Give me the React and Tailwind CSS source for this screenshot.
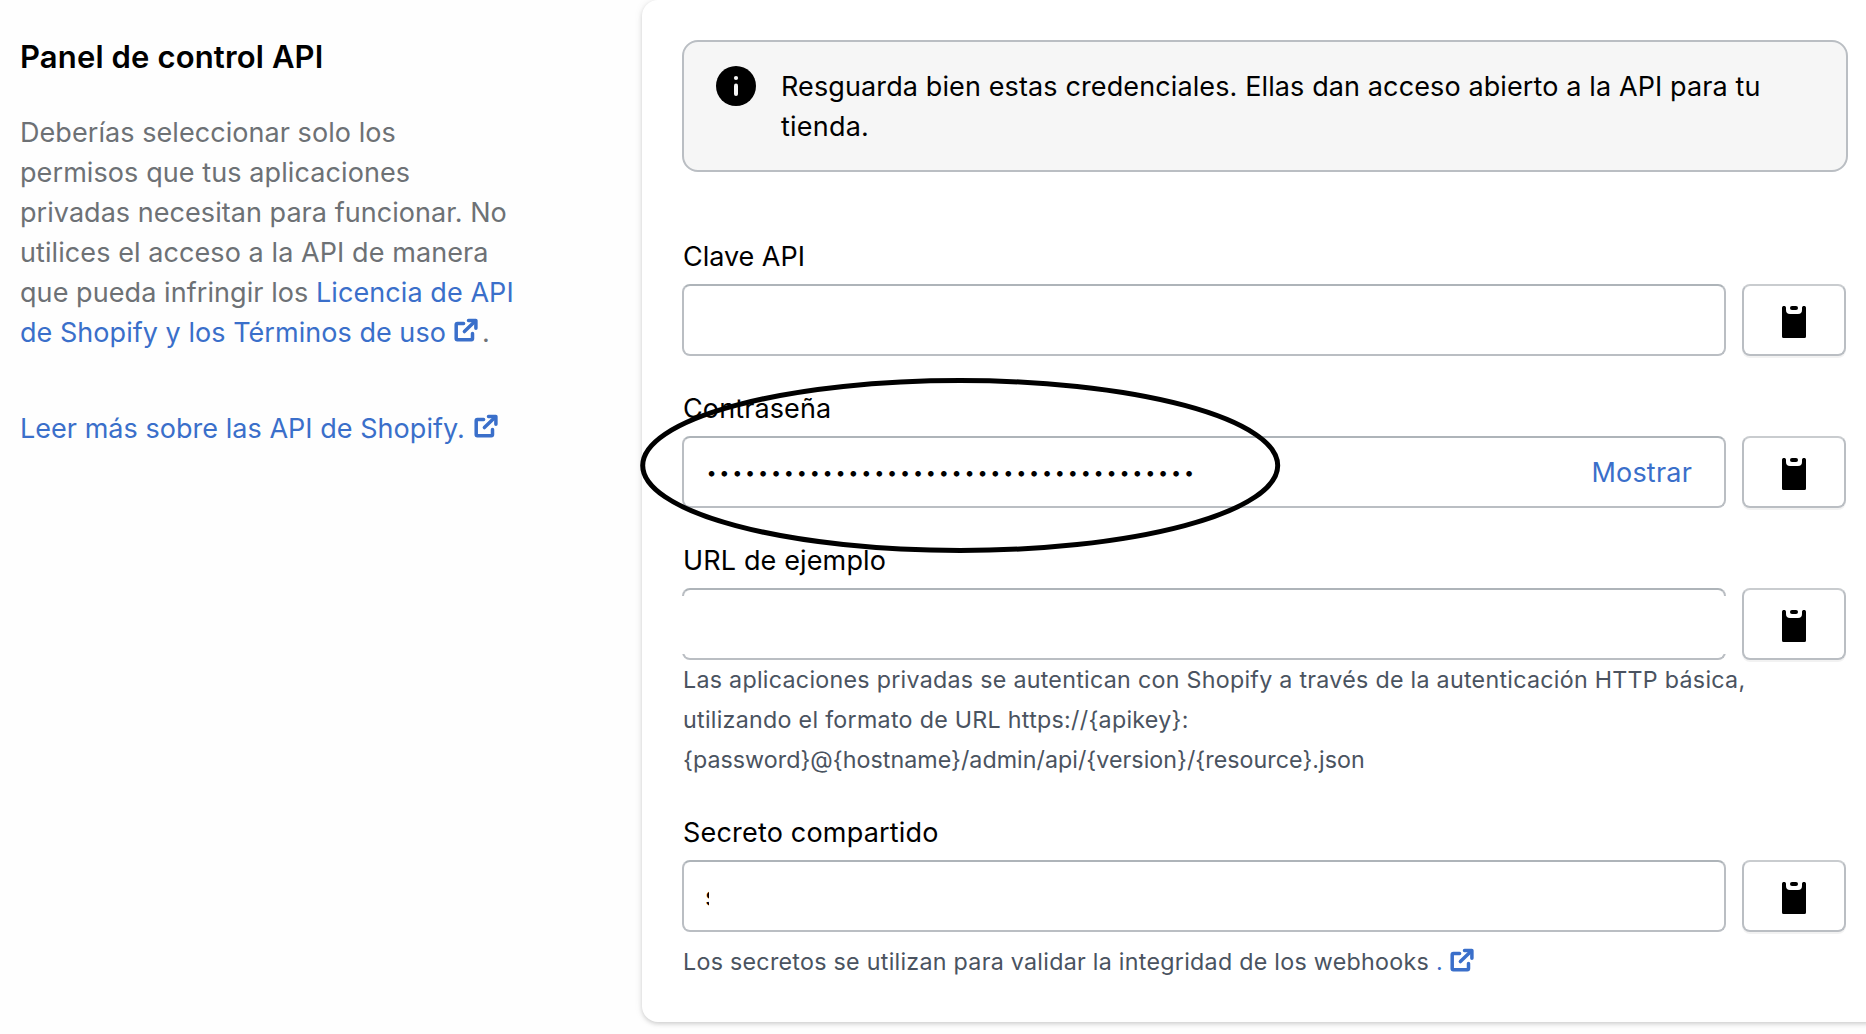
function ExternalIcon({ className = "" }) {
  return (
    <svg viewBox="0 0 24 24" className={`inline-block h-6 w-6 ${className}`} fill="none" stroke="#3a6fca" strokeWidth="3.5" aria-hidden="true">
      <path d="M9.600 5.500H3.400a1.200 1.200 0 0 0-1.200 1.200v13.800a1.200 1.200 0 0 0 1.200 1.200h13.900a1.200 1.200 0 0 0 1.200-1.200v-5" strokeLinecap="round" />
      <path d="M10.400 13.600L20 4.200" strokeLinecap="round" />
      <path d="M14.500 2.400H21.900v7.800" strokeLinecap="round" strokeLinejoin="round" />
    </svg>
  );
}

function ClipboardIcon() {
  return (
    <svg viewBox="0 0 24 32" className="mt-1 h-8 w-6" aria-hidden="true">
      <path d="M2 0c1.200 0 2 .6 2 2v2a4 4 0 0 0 4 4h8a4 4 0 0 0 4-4V2c0-1.400.8-2 2-2s2 .6 2 2v28.500a1.500 1.500 0 0 1-1.500 1.500h-21A1.500 1.500 0 0 1 0 30.500V2C0 .6.8 0 2 0z" />
      <rect x="8" y="0" width="8" height="4" rx="2" />
    </svg>
  );
}

function InfoIcon() {
  return (
    <svg viewBox="0 0 40 40" className="h-10 w-10 shrink-0" aria-hidden="true">
      <circle cx="20" cy="20" r="20" />
      <circle cx="20" cy="12" r="2.1" fill="#f6f6f6" />
      <path d="M20 19.500v8.600" stroke="#f6f6f6" strokeWidth="4" strokeLinecap="round" />
    </svg>
  );
}

function Field({ label, labelClass, boxClass = "", children }) {
  return (
    <div>
      <div className={`ml-px h-10 pt-px text-black ${labelClass}`}>{label}</div>
      <div className="mt-2 flex gap-4">
        <div className={`relative flex h-[72px] w-[1044px] items-center justify-between rounded-lg border-2 border-[#babec3] border-t-[#aeb4b9] bg-white ${boxClass}`}>
          {children}
        </div>
        <button className="flex h-[72px] w-[104px] items-center justify-center rounded-lg border-2 border-[#babec3] border-t-[#c9cccf] bg-white shadow-[0_2px_0_rgba(0,0,0,0.05)]">
          <ClipboardIcon />
        </button>
      </div>
    </div>
  );
}

export default function App() {
  return (
    <div className="relative flex h-[1034px] w-[1866px] overflow-hidden bg-[#fefefe] font-['Inter',sans-serif] text-[27px] leading-10">
      <aside className="w-[642px] shrink-0 pt-[37px] pl-5">
        <h2 className="text-[31px] font-semibold tracking-[0.14px] whitespace-nowrap text-black">Panel de control API</h2>
        <p className="mt-9 whitespace-nowrap text-[#6d7175]">
          <span className="tracking-[0.06px]">Deberías seleccionar solo los</span><br />
          <span className="tracking-[0.09px]">permisos que tus aplicaciones</span><br />
          <span className="tracking-[0.045px]">privadas necesitan para funcionar. No</span><br />
          <span className="tracking-[0.08px]">utilices el acceso a la API de manera</span><br />
          <span className="tracking-[0.07px]">que pueda infringir los <a className="text-[#3a6fca]">Licencia de API</a></span><br />
          <a className="tracking-[0.04px] text-[#3a6fca]">de Shopify y los Términos de uso</a>
          <ExternalIcon className="relative -top-[5px] mr-1 ml-2" />.
        </p>
        <p className="mt-14 whitespace-nowrap">
          <a className="tracking-[0.035px] text-[#3a6fca]">Leer más sobre las API de Shopify.</a>
          <ExternalIcon className="relative -top-[5px] ml-[9px]" />
        </p>
      </aside>

      <main className="h-[1022px] w-[1240px] shrink-0 rounded-2xl bg-white pt-10 pl-10 shadow-[0_0_10px_rgba(23,24,24,0.07),0_2px_4px_rgba(0,0,0,0.15)]">
        <div className="flex h-[132px] w-[1166px] rounded-2xl border-2 border-[#babec3] bg-[#f6f6f6] pt-6 pl-8 text-black">
          <InfoIcon />
          <p className="ml-[25px] pt-px whitespace-nowrap">
            <span className="tracking-[0.115px]">Resguarda bien estas credenciales. Ellas dan acceso abierto a la API para tu</span><br />
            <span className="tracking-[0.207px]">tienda.</span>
          </p>
        </div>

        <div className="mt-16">
          <Field label="Clave API" labelClass="tracking-[-0.03px]" />
        </div>
        <div className="mt-8">
          <Field label="Contraseña" labelClass="tracking-[0.115px]">
            <span className="ml-[21px] flex pt-0.5 text-[18px] text-black">
              {Array.from("••••••••••••••••••••••••••••••••••••••").map((dot, i) => (
                <span key={i} className="flex w-[12.91px] justify-center">{dot}</span>
              ))}
            </span>
            <a className="mr-8 pt-0.5 tracking-[0.2px] text-[#3a6fca]">Mostrar</a>
          </Field>
        </div>
        <div className="mt-8">
          <Field label="URL de ejemplo" labelClass="tracking-[0.14px]">
            <span className="absolute -inset-x-[3px] top-1.5 h-[58px] bg-white" />
          </Field>
        </div>
        <p className="ml-px text-[23.25px] whitespace-nowrap text-[#4a5360]">
          <span className="tracking-[0.27px]">Las aplicaciones privadas se autentican con Shopify a través de la autenticación HTTP básica,</span><br />
          <span className="tracking-[0.275px]">utilizando el formato de URL https://&#123;apikey&#125;:</span><br />
          <span className="tracking-[0.03px]">&#123;password&#125;@&#123;hostname&#125;/admin/api/&#123;version&#125;/&#123;resource&#125;.json</span>
        </p>
        <div className="mt-8">
          <Field label="Secreto compartido" labelClass="tracking-[0.19px]">
            <span className="ml-[21px] w-[3.500px] overflow-hidden pt-0.5 text-black">s</span>
          </Field>
        </div>
        <p className="mt-2.5 ml-px text-[23.25px] whitespace-nowrap text-[#4a5360]">
          <span className="tracking-[0.27px]">Los secretos se utilizan para validar la integridad de los webhooks</span>
          <a className="ml-[7px] text-[#3a6fca]">.<ExternalIcon className="relative -top-[4px] ml-[7px]" /></a>
        </p>
      </main>

      <svg viewBox="0 0 644 180" className="pointer-events-none absolute top-[376px] left-[638px] h-[180px] w-[644px]" fill="none" aria-hidden="true">
        <ellipse cx="322.200" cy="89.500" rx="317.500" ry="85" stroke="#000" strokeWidth="5" />
      </svg>
    </div>
  );
}
